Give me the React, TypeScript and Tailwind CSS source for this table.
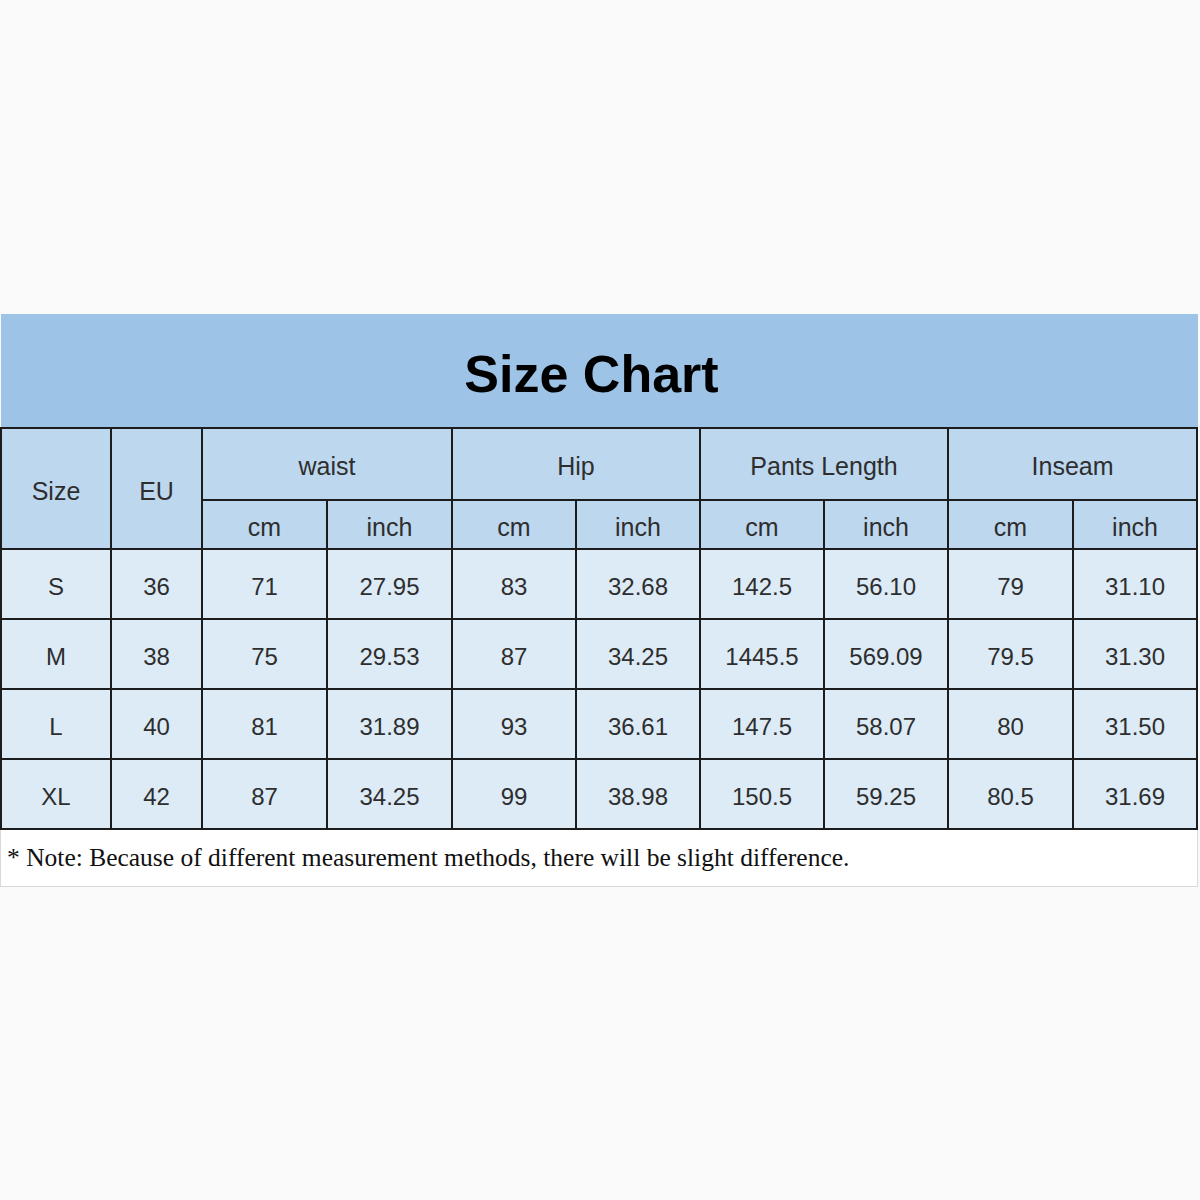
const rows = [
  ['S', '36', '71', '27.95', '83', '32.68', '142.5', '56.10', '79', '31.10'],
  ['M', '38', '75', '29.53', '87', '34.25', '1445.5', '569.09', '79.5', '31.30'],
  ['L', '40', '81', '31.89', '93', '36.61', '147.5', '58.07', '80', '31.50'],
  ['XL', '42', '87', '34.25', '99', '38.98', '150.5', '59.25', '80.5', '31.69'],
]

const widths = ['w-[110px]', 'w-[91px]', 'w-[125px]', 'w-[125px]', 'w-[124px]', 'w-[124px]', 'w-[124px]', 'w-[124px]', 'w-[125px]', 'w-[124px]']

const cell = 'border-2 border-[#1c1c1c] text-center align-middle px-0 pb-0 pt-[6px]'

export default function App() {
  return (
    <div className="min-h-[1200px] bg-[#fafafa] pt-[314px] font-['Liberation_Sans',Arial,sans-serif] text-[#2e2e2e]">
      <div className="ml-[1px] w-[1197px]">
        <div className="h-[113px] bg-[#9dc3e6] flex items-center justify-center pr-4">
          <h1 className="text-[52px] font-bold text-black leading-none mt-[6px]">Size Chart</h1>
        </div>
        <table className="w-[1197px] -ml-[1px] border-collapse table-fixed text-[24px]">
          <colgroup>
            {widths.map((w, i) => (
              <col key={i} className={w} />
            ))}
          </colgroup>
          <thead className="bg-[#bdd7ee]">
            <tr className="h-[72px]">
              <th rowSpan={2} className={`${cell} font-normal text-[25px]`}>Size</th>
              <th rowSpan={2} className={`${cell} font-normal text-[25px]`}>EU</th>
              <th colSpan={2} className={`${cell} font-normal text-[25px]`}>waist</th>
              <th colSpan={2} className={`${cell} font-normal text-[25px]`}>Hip</th>
              <th colSpan={2} className={`${cell} font-normal text-[25px]`}>Pants Length</th>
              <th colSpan={2} className={`${cell} font-normal text-[25px]`}>Inseam</th>
            </tr>
            <tr className="h-[49px]">
              {['cm', 'inch', 'cm', 'inch', 'cm', 'inch', 'cm', 'inch'].map((u, i) => (
                <th key={i} className={`${cell} font-normal text-[25px]`}>{u}</th>
              ))}
            </tr>
          </thead>
          <tbody className="bg-[#ddebf7]">
            {rows.map((r) => (
              <tr key={r[0]} className="h-[70px]">
                {r.map((v, i) => (
                  <td key={i} className={cell}>{v}</td>
                ))}
              </tr>
            ))}
          </tbody>
        </table>
        <div className="h-[57px] -ml-[1px] w-[1198px] bg-white border border-t-0 border-[#d9d9d9] flex items-center pl-[6px]">
          <p className="font-['Liberation_Serif','Times_New_Roman',serif] text-[25.5px] text-[#111]">
            * Note: Because of different measurement methods, there will be slight difference.
          </p>
        </div>
      </div>
    </div>
  )
}
